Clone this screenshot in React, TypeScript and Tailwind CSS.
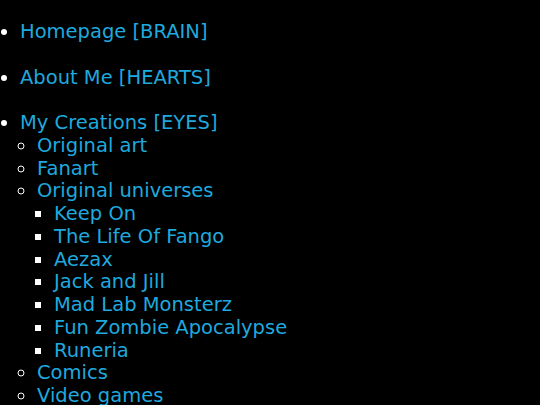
import React from 'react';

const universes = [
  'Keep On',
  'The Life Of Fango',
  'Aezax',
  'Jack and Jill',
  'Mad Lab Monsterz',
  'Fun Zombie Apocalypse',
  'Runeria',
];

const Link: React.FC<{ children: React.ReactNode }> = ({ children }) => (
  <a href="#" className="text-[#1fa9de]">
    {children}
  </a>
);

const App: React.FC = () => {
  return (
    <div
      className="min-h-[405px] bg-black text-white text-[19.5px] leading-[22.75px] overflow-hidden"
      style={{ fontFamily: '"DejaVu Sans", Verdana, sans-serif' }}
    >
      <ul className="list-disc pl-[20px] pt-[21px] marker:text-white">
        <li className="mb-[22.75px]">
          <Link>Homepage [BRAIN]</Link>
        </li>
        <li className="mb-[22.75px]">
          <Link>About Me [HEARTS]</Link>
        </li>
        <li>
          <Link>My Creations [EYES]</Link>
          <ul className="list-[circle] pl-[17px]">
            <li>
              <Link>Original art</Link>
            </li>
            <li>
              <Link>Fanart</Link>
            </li>
            <li>
              <Link>Original universes</Link>
              <ul className="list-[square] pl-[17px]">
                {universes.map((u) => (
                  <li key={u}>
                    <Link>{u}</Link>
                  </li>
                ))}
              </ul>
            </li>
            <li>
              <Link>Comics</Link>
            </li>
            <li>
              <Link>Video games</Link>
            </li>
          </ul>
        </li>
      </ul>
    </div>
  );
};

export default App;
